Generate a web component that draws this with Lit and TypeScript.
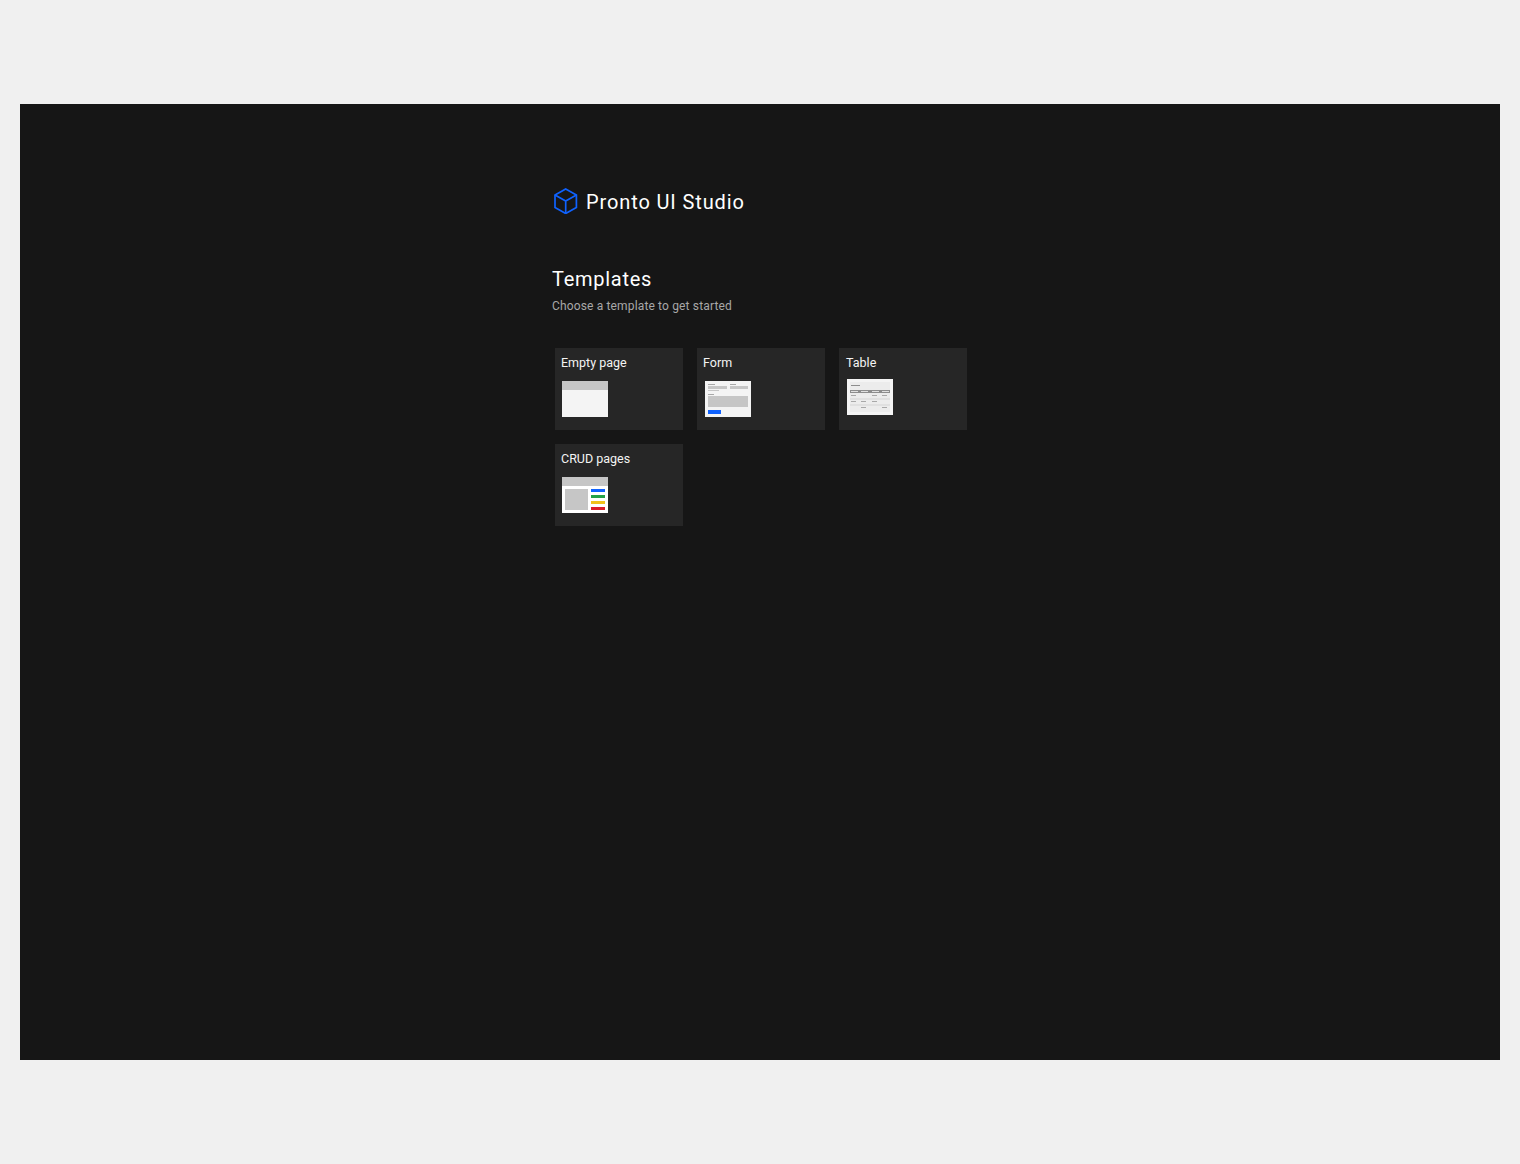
import { LitElement, html, css, svg } from "lit";
import { customElement } from "lit/decorators.js";

const thumbEmpty = svg`<rect width="46" height="36" fill="#f4f4f4"/><rect width="46" height="9" fill="#c6c6c6"/>`;
const thumbForm = svg`<rect width="46" height="36" fill="#f4f4f4"/>
<rect x="3" y="3" width="7" height="1" fill="#a8a8a8"/><rect x="25" y="3" width="6" height="1" fill="#a8a8a8"/>
<rect x="3" y="5" width="19" height="3" fill="#c6c6c6"/><rect x="25" y="5" width="18" height="3" fill="#c6c6c6"/>
<rect x="3" y="9" width="11" height="1" fill="#c6c6c6"/><rect x="3" y="13" width="6" height="1" fill="#a8a8a8"/>
<rect x="3" y="15" width="40" height="11" fill="#c6c6c6"/><rect x="3" y="29" width="13" height="4" fill="#0f62fe"/>`;
const thumbTable = svg`<rect width="46" height="36" fill="#f4f4f4"/><rect x="3" y="3" width="40" height="30" fill="#ececec"/>
<rect x="4" y="6" width="9" height="1" fill="#8d8d8d"/><rect x="3" y="11" width="40" height="3" fill="#8d8d8d"/>
${[4, 14, 25, 35].map((x) => svg`<rect x=${x} y="12" width="7" height="1" fill="#e0e0e0"/>`)}
<rect x="3" y="19" width="40" height="2" fill="#e0e0e0"/><rect x="3" y="25" width="40" height="2" fill="#e0e0e0"/>
${[[4,16],[25,16],[35,16],[4,22],[14,22],[25,22],[14,28],[35,28]].map(([x,y]) => svg`<rect x=${x} y=${y} width="5" height="1" fill="#a8a8a8"/>`)}`;
const thumbCrud = svg`<rect width="46" height="36" fill="#ffffff"/><rect width="46" height="9" fill="#c6c6c6"/>
<rect x="3" y="12" width="23" height="21" fill="#c6c6c6"/><rect x="29" y="12" width="14" height="3" fill="#0f62fe"/>
<rect x="29" y="18" width="14" height="3" fill="#24a148"/><rect x="29" y="24" width="14" height="3" fill="#f1c21b"/><rect x="29" y="30" width="14" height="3" fill="#da1e28"/>`;

const templates = [
  { name: "Empty page", art: thumbEmpty, cls: "" },
  { name: "Form", art: thumbForm, cls: "form" },
  { name: "Table", art: thumbTable, cls: "table" },
  { name: "CRUD pages", art: thumbCrud, cls: "" },
];

@customElement("app-root")
export class AppRoot extends LitElement {
  static styles = css`
    :host { display: block; min-height: 1164px; box-sizing: border-box; padding: 104px 20px; background: #f0f0f0;
      font-family: Roboto, "Noto Sans", sans-serif; }
    .frame { height: 956px; box-sizing: border-box; background: #161616; padding: 84px 0 0 532px; color: #f4f4f4; }
    .brand { display: flex; align-items: center; gap: 7px; height: 26px; padding-left: 1px; margin-bottom: 51px; }
    .brand svg { width: 26px; height: 26px; display: block; }
    .brand span { font-size: 20px; line-height: 26px; letter-spacing: 0.88px; color: #fff; position: relative; top: 1px; }
    h1 { margin: 0 0 4px; font-size: 20px; line-height: 28px; font-weight: 400; color: #fff; letter-spacing: 0.72px; }
    p { margin: 0 0 33px; font-size: 12px; line-height: 18px; color: #a8a8a8; letter-spacing: 0.15px; }
    .grid { display: grid; grid-template-columns: repeat(3, 128px); grid-auto-rows: 82px; gap: 14px; padding-left: 3px; }
    .card { background: #262626; padding: 7px 6px; box-sizing: border-box; }
    .card.table { padding-left: 7px; }
    .name { font-size: 12.5px; line-height: 16px; color: #f4f4f4; margin-bottom: 10px; }
    .table .name { margin-bottom: 8px; }
    .thumb { display: block; width: 46px; height: 36px; margin-left: 1px; }
    .form .thumb { margin-left: 2px; width: 46px; }
  `;

  render() {
    return html`<div class="frame">
      <div class="brand">
        <svg viewBox="0 0 26 26" fill="none" stroke="#0f62fe" stroke-width="1.7" stroke-linejoin="miter">
          <path d="M12.7 1 23.4 7V19.5L12.7 25.5 2 19.5V7Z" />
          <path d="M2 7 12.7 13 23.4 7M12.7 13V25.5" />
        </svg>
        <span>Pronto UI Studio</span>
      </div>
      <h1>Templates</h1>
      <p>Choose a template to get started</p>
      <div class="grid">
        ${templates.map((t) => html`<div class="card ${t.cls}">
          <div class="name">${t.name}</div>
          <svg class="thumb" viewBox="0 0 46 36">${t.art}</svg>
        </div>`)}
      </div>
    </div>`;
  }
}
